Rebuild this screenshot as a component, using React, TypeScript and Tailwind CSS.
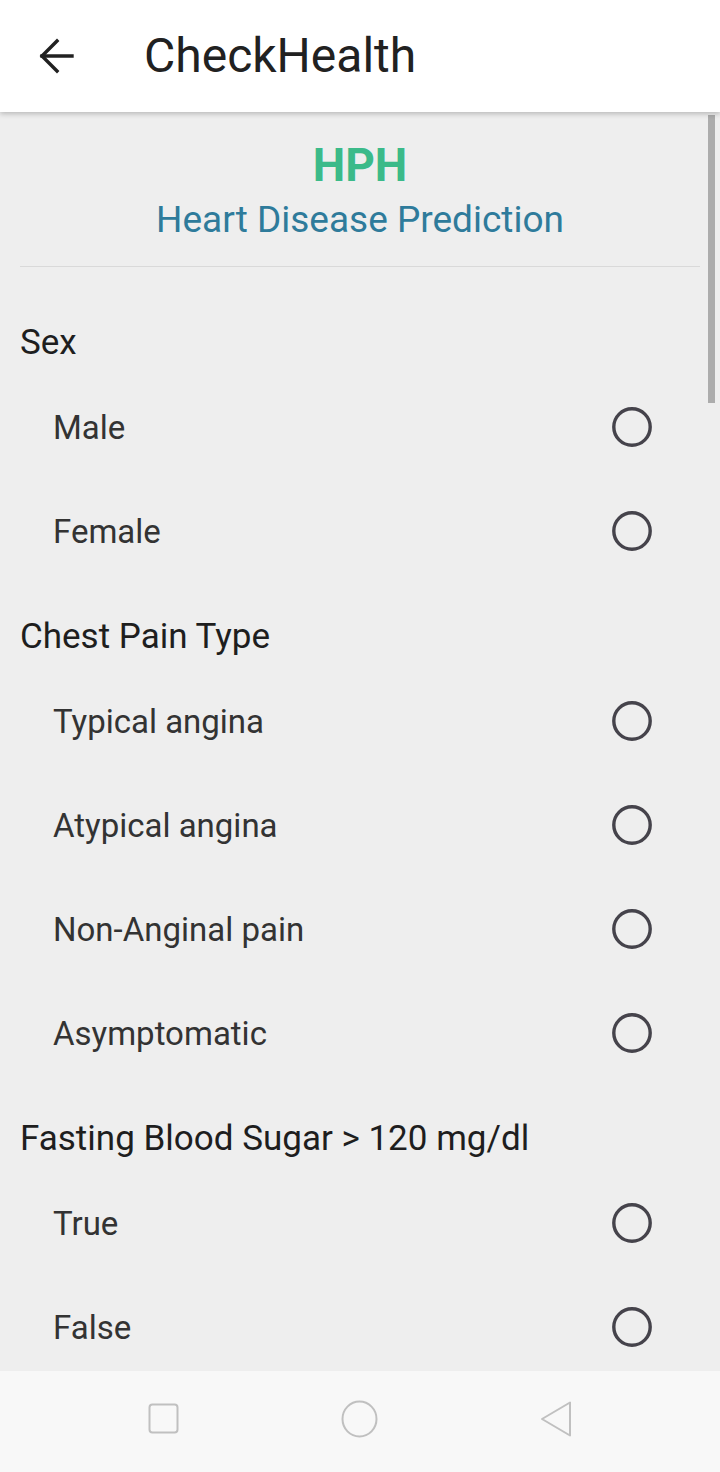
import React from "react";

type Group = { title: string; options: string[] };

const groups: Group[] = [
  { title: "Sex", options: ["Male", "Female"] },
  {
    title: "Chest Pain Type",
    options: ["Typical angina", "Atypical angina", "Non-Anginal pain", "Asymptomatic"],
  },
  { title: "Fasting Blood Sugar > 120 mg/dl", options: ["True", "False"] },
];

function Radio() {
  return (
    <svg width="40" height="40" viewBox="0 0 40 40" className="shrink-0">
      <circle cx="20" cy="20" r="18.2" fill="none" stroke="#45434b" strokeWidth="3.4" />
    </svg>
  );
}

function OptionRow({ label }: { label: string }) {
  return (
    <div className="flex h-[104px] items-center justify-between pl-[53px] pr-[68px]">
      <span className="text-[33px] leading-none text-[#333333]">{label}</span>
      <Radio />
    </div>
  );
}

export default function App() {
  return (
    <div className="flex h-[1472px] w-[720px] flex-col overflow-hidden bg-[#eeeeee] font-['Roboto',sans-serif]">
      {/* toolbar */}
      <header className="relative z-10 flex h-[112px] shrink-0 items-center bg-white shadow-[0_2px_5px_rgba(0,0,0,0.22)]">
        <svg width="112" height="112" viewBox="0 0 112 112" className="shrink-0">
          <path d="M42 56H72" stroke="#212121" strokeWidth="3.4" strokeLinecap="square" />
          <path d="M57 41L42 56L57 71" fill="none" stroke="#212121" strokeWidth="3.4" strokeLinecap="square" />
        </svg>
        <h1 className="ml-[32px] text-[48px] leading-none text-[#212121]">CheckHealth</h1>
      </header>

      <main className="relative flex-1 overflow-hidden">
        {/* scrollbar */}
        <div className="absolute right-[5px] top-[3px] h-[288px] w-[7px] bg-[#acacac]" />

        <div className="flex flex-col items-center pt-[25px]">
          <div className="text-[46px] font-bold leading-[56px] text-[#3bba89]">HPH</div>
          <div className="mt-[5px] text-[37px] leading-[44px] text-[#2e7b9b]">Heart Disease Prediction</div>
        </div>
        <div className="mx-[20px] mt-[24px] h-px bg-[#d9d9d9]" />
        <div className="pt-[22px]">
          {groups.map((g) => (
            <section key={g.title} className="pt-[20px]">
              <div className="flex h-[66px] items-center pl-[20px]">
                <span className="text-[35px] leading-none text-[#1e1e1e]">{g.title}</span>
              </div>
              {g.options.map((o) => (
                <OptionRow key={o} label={o} />
              ))}
            </section>
          ))}
        </div>
      </main>

      {/* system nav bar */}
      <nav className="flex h-[101px] shrink-0 items-start justify-center bg-[#f8f8f8] pt-[28px]">
        <div className="flex w-[196px] justify-center">
          <svg width="40" height="40" viewBox="0 0 40 40">
            <rect x="5.5" y="5.5" width="28" height="28" rx="3" fill="none" stroke="#c0c0c0" strokeWidth="2" />
          </svg>
        </div>
        <div className="flex w-[196px] justify-center">
          <svg width="40" height="40" viewBox="0 0 40 40">
            <ellipse cx="19.5" cy="20" rx="17" ry="17.5" fill="none" stroke="#c0c0c0" strokeWidth="2" />
          </svg>
        </div>
        <div className="flex w-[196px] justify-center">
          <svg width="40" height="40" viewBox="0 0 40 40">
            <path d="M6 20L34 3.5V36.5Z" fill="none" stroke="#c0c0c0" strokeWidth="2" strokeLinejoin="round" />
          </svg>
        </div>
      </nav>
    </div>
  );
}
